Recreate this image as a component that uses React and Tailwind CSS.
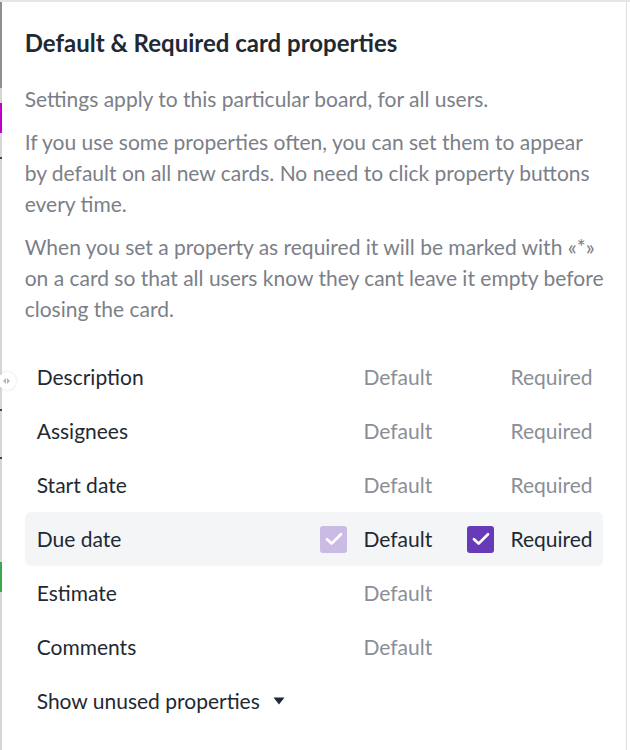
import React, { useState } from 'react'

const FONT = { fontFamily: 'Lato, "Noto Sans", sans-serif' }

const properties = [
  { name: 'Description', required: true },
  { name: 'Assignees', required: true },
  { name: 'Start date', required: true },
  { name: 'Due date', required: true, isDefault: true, isRequired: true, active: true },
  { name: 'Estimate', required: false },
  { name: 'Comments', required: false },
]

const Check = ({ checked, faded }) => (
  <span
    className={`w-[27px] h-[27px] shrink-0 rounded-[3px] flex items-center justify-center ${
      faded ? 'bg-[#c9bbe4]' : checked ? 'bg-[#673ab7]' : 'bg-transparent'
    }`}
  >
    {(checked || faded) && (
      <svg width="18" height="14" viewBox="0 0 18 14" fill="none">
        <path d="M2 7.2l4.6 4.4L16 2.3" stroke="white" strokeWidth="2.7" strokeLinecap="round" strokeLinejoin="round" />
      </svg>
    )}
  </span>
)

const PropertyRow = ({ prop }) => (
  <div
    className={`h-[54px] flex items-center pl-3 pr-[13px] rounded-md ${prop.active ? 'bg-[#f4f5f7]' : ''}`}
  >
    <span className="flex-1 text-[21px] text-[#1f2933]">{prop.name}</span>
    <div className="flex items-center gap-4 w-[147px]">
      <Check faded={prop.active} />
      <span className={`text-[21px] ${prop.active ? 'text-[#1f2933]' : 'text-[#8a8f96]'}`}>Default</span>
    </div>
    <div className="flex items-center gap-4 w-[123px]">
      {prop.required && (
        <>
          <Check checked={prop.isRequired} />
          <span className={`text-[21px] ${prop.active ? 'text-[#1f2933]' : 'text-[#8a8f96]'}`}>Required</span>
        </>
      )}
    </div>
  </div>
)

export default function App() {
  const [open, setOpen] = useState(false)

  return (
    <div className="w-[630px] h-[750px] bg-[#e6e6e6] pt-[2px] overflow-hidden" style={FONT}>
      <div className="flex h-full">
        {/* left edge of the page behind */}
        <div className="w-[2px] flex flex-col relative">
          <div className="h-[86px] bg-[#8e8e8e]" />
          <div className="h-[15px] bg-[#d6d6d6]" />
          <div className="h-[30px] bg-[#c000c8]" />
          <div className="h-[24px] bg-[#d6d6d6]" />
          <div className="h-[2px] bg-[#444]" />
          <div className="h-[250px] bg-[#d6d6d6]" />
          <div className="h-[2px] bg-[#444]" />
          <div className="h-[46px] bg-[#d6d6d6]" />
          <div className="h-[2px] bg-[#444]" />
          <div className="h-[103px] bg-[#d6d6d6]" />
          <div className="h-[30px] bg-[#3da64a]" />
          <div className="flex-1 bg-[#d6d6d6]" />
        </div>

        <div className="flex-1 bg-white border-r border-[#dedede] relative px-[23px] pt-[25px]">
          {/* resize handle */}
          <div className="absolute left-[-4px] top-[370px] w-[18px] h-[18px] rounded-full bg-white shadow-[0_0_3px_rgba(0,0,0,0.15)] flex items-center justify-center gap-[1px]">
            <span className="w-0 h-0 border-y-[3px] border-y-transparent border-r-[3px] border-r-[#b5b5b5]" />
            <span className="w-0 h-0 border-y-[3px] border-y-transparent border-l-[3px] border-l-[#b5b5b5]" />
          </div>

          <h1 className="text-[24px] leading-[32px] font-bold text-[#1f2933]">
            Default &amp; Required card properties
          </h1>

          <div className="mt-[24px] text-[21px] leading-[31px] text-[#7b8088] flex flex-col gap-3 whitespace-nowrap">
            <p>Settings apply to this particular board, for all users.</p>
            <p>
              If you use some properties often, you can set them to appear
              <br />
              by default on all new cards. No need to click property buttons
              <br />
              every time.
            </p>
            <p>
              When you set a property as required it will be marked with «*»
              <br />
              on a card so that all users know they cant leave it empty before
              <br />
              closing the card.
            </p>
          </div>

          <div className="mt-[26px] flex flex-col">
            {properties.map((p) => (
              <PropertyRow key={p.name} prop={p} />
            ))}
            <button
              onClick={() => setOpen(!open)}
              className="h-[54px] flex items-center gap-[13px] pl-3 text-[21px] text-[#1f2933]"
            >
              Show unused properties
              <svg width="12" height="8" viewBox="0 0 12 8">
                <path d="M0.5 0.5h11L6 7.5z" fill="#1f2933" />
              </svg>
            </button>
          </div>
        </div>
        <div className="w-[3px] bg-white" />
      </div>
    </div>
  )
}
